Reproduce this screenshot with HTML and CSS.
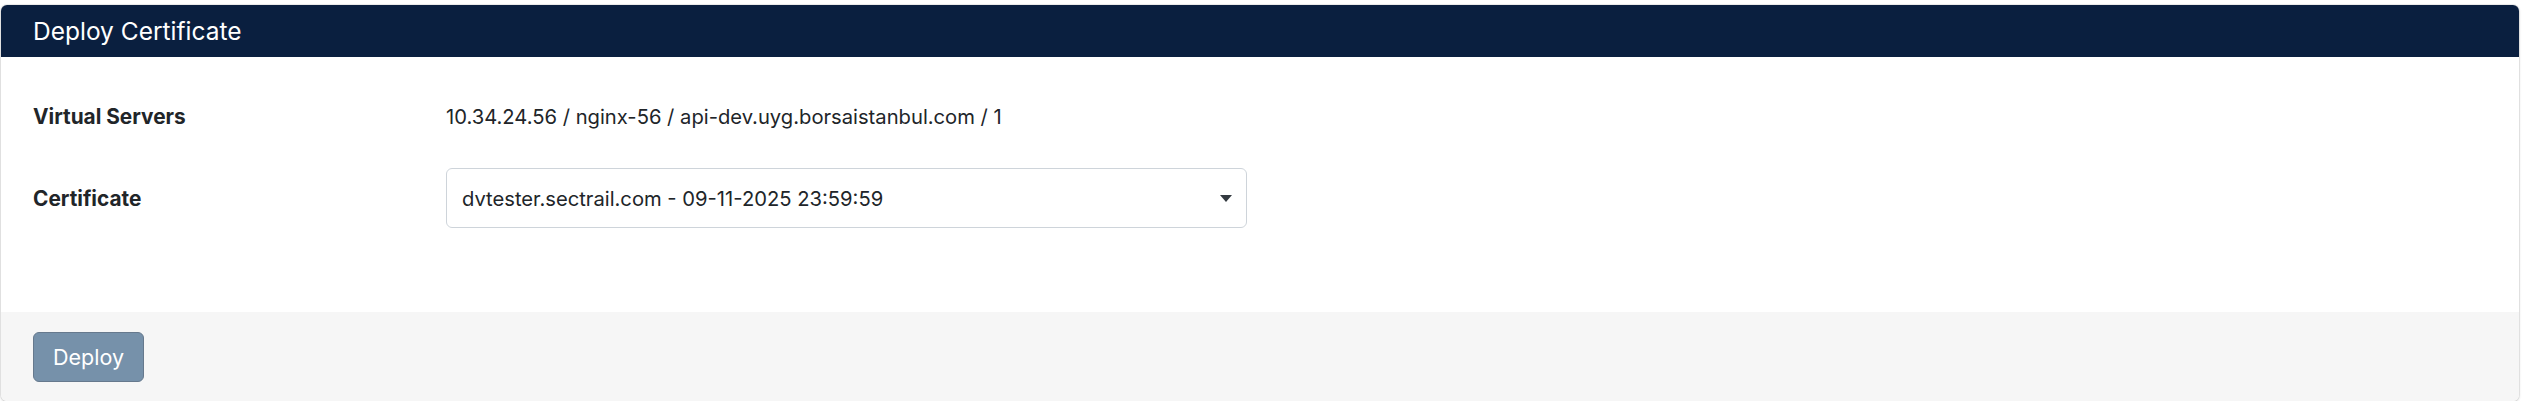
FILE: index.html
```html
<!DOCTYPE html>
<html lang="en">
<head>
<meta charset="utf-8">
<title>Deploy Certificate</title>
<link rel="stylesheet" href="styles.css">
</head>
<body>
<div class="card">
  <div class="card-header">
    <h2 class="card-title">Deploy Certificate</h2>
  </div>
  <div class="card-body">
    <div class="form-row">
      <div class="form-label">Virtual Servers</div>
      <div class="form-value">10.34.24.56 / nginx-56 / api-dev.uyg.borsaistanbul.com / 1</div>
    </div>
    <div class="form-row">
      <div class="form-label">Certificate</div>
      <div class="select">
        <span class="select-text">dvtester.sectrail.com - 09-11-2025 23:59:59</span>
        <svg class="select-arrow" width="12" height="7" viewBox="0 0 12 7"><polygon points="0,0 12,0 6,7" fill="#333a40"/></svg>
      </div>
    </div>
  </div>
  <div class="card-footer">
    <button class="btn" type="button">Deploy</button>
  </div>
</div>
</body>
</html>
```
FILE: styles.css
```css
html, body {
  margin: 0;
  background: #ffffff;
}
body {
  padding: 5px 5px 0 1px;
  font-family: Inter, "Liberation Sans", Arial, sans-serif;
  color: #212529;
}
.card {
  border-radius: 6px;
  overflow: hidden;
  box-shadow: 0 0 0 1px rgba(0,0,0,0.06), 0 1px 3px rgba(0,0,0,0.18);
  background: #ffffff;
}
.card-header {
  height: 52px;
  background: #0a1f3f;
  display: flex;
  align-items: center;
  padding-left: 32px;
}
.card-title {
  margin: 0;
  font-size: 24.5px;
  font-weight: 400;
  color: #ffffff;
}
.card-body {
  padding: 29px 32px 84px 32px;
  display: flex;
  flex-direction: column;
  gap: 22px;
}
.form-row {
  display: grid;
  grid-template-columns: 413px 801px;
  align-items: center;
  min-height: 60px;
}
.form-label {
  font-weight: 700;
  font-size: 20.8px;
}
.form-value {
  font-size: 20.2px;
}
.select {
  height: 60px;
  box-sizing: border-box;
  border: 1px solid #ced4da;
  border-radius: 6px;
  display: flex;
  align-items: center;
  justify-content: space-between;
  padding: 0 14px 0 15px;
  font-size: 20.2px;
}
.select-arrow {
  display: block;
}
.card-footer {
  background: #f6f6f6;
  padding: 20px 32px 19px 32px;
}
.btn {
  width: 111px;
  height: 50px;
  border: 1px solid #66798d;
  border-radius: 6px;
  background: #7691aa;
  color: #ffffff;
  font-family: inherit;
  font-size: 21.5px;
  padding: 0;
}
```
